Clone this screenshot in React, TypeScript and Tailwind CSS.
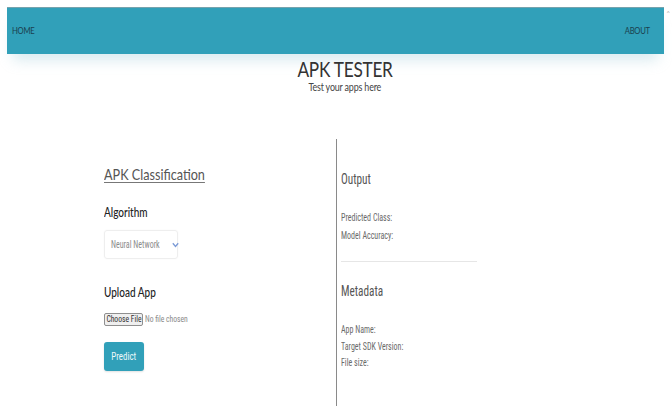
import React from "react";

function Field({ label }: { label: string }) {
  return (
    <div className="origin-left scale-x-[0.76] text-[10.5px] text-[#6a6a6a] font-['Roboto_Condensed',Roboto,sans-serif]">
      {label}
    </div>
  );
}

export default function App() {
  return (
    <div className="w-[672px] h-[406px] bg-white overflow-hidden relative font-['Lato','Open_Sans',sans-serif]">
      {/* navigation bar */}
      <div className="pt-[7px] pl-[7px] pr-[8px]">
        <nav className="h-[47px] bg-[#31a0b9] border-t border-[#76a3ad] flex items-center justify-between pl-[5px] pr-[14px] text-[8.5px] text-[#1b3f4e] tracking-[-0.3px] shadow-[0_12px_14px_-6px_rgba(200,225,232,0.7)]">
          <span className="origin-left scale-x-[0.9] inline-block">HOME</span>
          <span className="origin-right scale-x-[0.9] inline-block">ABOUT</span>
        </nav>
      </div>
      <span className="absolute right-[2px] top-[10px] text-[6px] leading-none text-[#aaa]">^</span>

      {/* page heading */}
      <header className="flex flex-col items-center mt-[3px] ml-[18px] h-[36px]">
        <h1 className="scale-x-[0.82] text-[21px] leading-[24px] text-[#333] tracking-[-0.3px]">APK TESTER</h1>
        <p className="scale-x-[0.85] text-[10.5px] leading-[12px] text-[#444] tracking-[-0.2px]">Test your apps here</p>
      </header>

      <main className="flex mt-[46px]">
        {/* classification form */}
        <section className="w-[336px] pl-[104px] pt-[26px]">
          <h2 className="origin-left scale-x-[0.79] text-[16px] leading-[18px] text-[#555] underline underline-offset-[2px] decoration-1 decoration-[#777]">
            APK Classification
          </h2>
          <h3 className="origin-left scale-x-[0.8] mt-[22px] text-[12.5px] leading-[16px] text-[#222] font-medium">
            Algorithm
          </h3>
          <div className="mt-[9px] w-[74px] h-[29px] border border-[#eee] rounded-[3px] flex items-center justify-between pl-[6px] pr-[5px] shadow-[0_0_2px_rgba(0,0,0,0.04)]">
            <span className="origin-left scale-x-[0.8] inline-block whitespace-nowrap text-[10px] text-[#8c8c8c] font-['Roboto_Condensed',Roboto,sans-serif]">
              Neural Network
            </span>
            <svg width="7" height="6" viewBox="0 0 7 6" fill="none" className="shrink-0">
              <path d="M0.8 1.3 L3.5 4.4 L6.2 1.3" stroke="#7a9ad6" strokeWidth="1.3" />
            </svg>
          </div>
          <h3 className="origin-left scale-x-[0.8] mt-[26px] text-[12.5px] leading-[16px] text-[#222] font-medium">
            Upload App
          </h3>
          <div className="mt-[11px] flex items-center text-[9.5px] font-['Roboto_Condensed',Roboto,sans-serif]">
            <span className="h-[13px] w-[39px] flex items-center justify-center bg-[#efefef] border border-[#8f8f8f] rounded-[2px] text-[#333]">
              <span className="scale-x-[0.8] inline-block whitespace-nowrap">Choose File</span>
            </span>
            <span className="ml-[2px] origin-left scale-x-[0.8] inline-block whitespace-nowrap text-[#888]">No file chosen</span>
          </div>
          <button className="mt-[16px] w-[40px] h-[29px] rounded-[3px] bg-[#31a0b9] text-[#eef8fa] text-[10.5px] font-['Roboto_Condensed',Roboto,sans-serif] shadow-[0_1px_2px_rgba(0,0,0,0.12)]">
            <span className="scale-x-[0.85] inline-block">Predict</span>
          </button>
        </section>

        {/* results */}
        <section className="flex-1 border-l border-[#8a8a8a] pl-[4px] pt-[31px] h-[268px] font-['Roboto_Condensed',Roboto,sans-serif]">
          <h2 className="origin-left scale-x-[0.75] text-[15px] leading-[18px] text-[#555]">Output</h2>
          <div className="mt-[21px] leading-[18px]">
            <Field label="Predicted Class:" />
            <Field label="Model Accuracy:" />
          </div>
          <div className="mt-[16px] w-[136px] border-t border-[#e6e6e6]" />
          <h2 className="origin-left scale-x-[0.75] mt-[20px] text-[15px] leading-[18px] text-[#555]">Metadata</h2>
          <div className="mt-[22px] leading-[16.5px]">
            <Field label="App Name:" />
            <Field label="Target SDK Version:" />
            <Field label="File size:" />
          </div>
        </section>
      </main>
    </div>
  );
}
